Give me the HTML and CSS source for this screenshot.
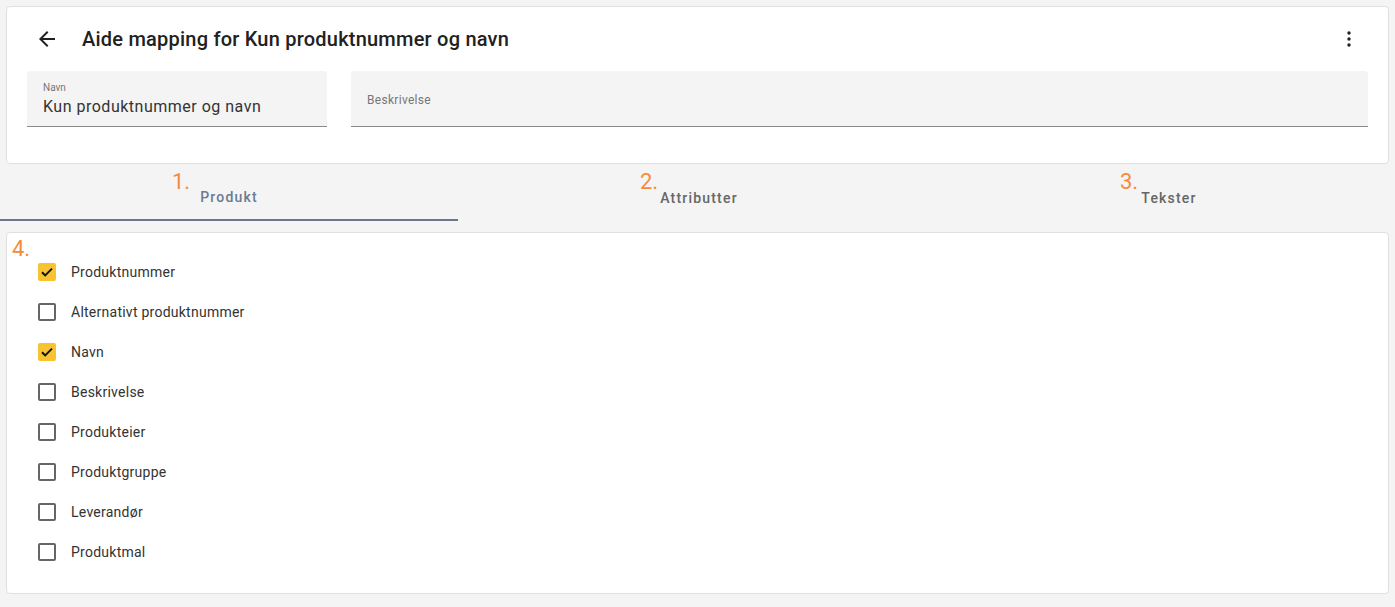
FILE: index.html
```html
<!DOCTYPE html>
<html lang="no">
<head>
<meta charset="utf-8">
<title>Aide mapping</title>
<link rel="stylesheet" href="styles.css">
</head>
<body>
<div class="page">
  <section class="card header-card">
    <div class="header-row">
      <button class="icon-btn back" aria-label="Tilbake">
        <svg width="24" height="24" viewBox="0 0 24 24"><path d="M20 11H7.83l5.59-5.59L12 4l-8 8 8 8 1.41-1.41L7.83 13H20v-2z" fill="#212121"/></svg>
      </button>
      <h1 class="title">Aide mapping for Kun produktnummer og navn</h1>
      <button class="icon-btn more" aria-label="Mer">
        <svg width="24" height="24" viewBox="0 0 24 24"><circle cx="12" cy="6" r="1.7" fill="#212121"/><circle cx="12" cy="12" r="1.7" fill="#212121"/><circle cx="12" cy="18" r="1.7" fill="#212121"/></svg>
      </button>
    </div>
    <div class="fields">
      <div class="field field-name">
        <span class="field-label">Navn</span>
        <span class="field-value">Kun produktnummer og navn</span>
      </div>
      <div class="field field-desc">
        <span class="field-placeholder">Beskrivelse</span>
      </div>
    </div>
  </section>

  <nav class="tabs">
    <div class="tab active"><span class="tab-label">Produkt</span><span class="marker m1">1.</span></div>
    <div class="tab"><span class="tab-label">Attributter</span><span class="marker m2">2.</span></div>
    <div class="tab"><span class="tab-label">Tekster</span><span class="marker m3">3.</span></div>
  </nav>

  <section class="card list-card">
    <span class="marker m4">4.</span>
    <div class="row"><span class="cb checked"><svg width="14" height="14" viewBox="0 0 14 14"><path d="M2 7.2l3.2 3.2L12 3.6" fill="none" stroke="#111" stroke-width="2"/></svg></span><span class="row-label">Produktnummer</span></div>
    <div class="row"><span class="cb"></span><span class="row-label">Alternativt produktnummer</span></div>
    <div class="row"><span class="cb checked"><svg width="14" height="14" viewBox="0 0 14 14"><path d="M2 7.2l3.2 3.2L12 3.6" fill="none" stroke="#111" stroke-width="2"/></svg></span><span class="row-label">Navn</span></div>
    <div class="row"><span class="cb"></span><span class="row-label">Beskrivelse</span></div>
    <div class="row"><span class="cb"></span><span class="row-label">Produkteier</span></div>
    <div class="row"><span class="cb"></span><span class="row-label">Produktgruppe</span></div>
    <div class="row"><span class="cb"></span><span class="row-label">Leverandør</span></div>
    <div class="row"><span class="cb"></span><span class="row-label">Produktmal</span></div>
  </section>
</div>
</body>
</html>
```

FILE: styles.css
```css
* { box-sizing: border-box; }
html, body { margin: 0; padding: 0; }
body {
  background: #f4f4f4;
  font-family: Roboto, "Liberation Sans", Arial, sans-serif;
  color: #212121;
  width: 1395px;
  height: 607px;
  overflow: hidden;
}
.page { padding-top: 6px; }
.card {
  background: #fff;
  border: 1px solid #e0e0e0;
  border-radius: 4px;
  margin: 0 6px;
}
.header-card { height: 158px; padding: 0 20px 0 20px; }
.header-row {
  display: flex;
  align-items: center;
  height: 64px;
}
.icon-btn {
  background: none;
  border: 0;
  padding: 0;
  width: 24px;
  height: 24px;
  display: flex;
  align-items: center;
  justify-content: center;
  cursor: pointer;
}
.back { margin-left: 8px; }
.title {
  margin: 0 0 0 23px;
  font-size: 20px;
  font-weight: 500;
  flex: 1;
  letter-spacing: 0.22px;
}
.more { margin-right: 7px; }
.fields {
  display: flex;
  gap: 24px;
}
.field {
  background: #f4f4f4;
  border-radius: 4px 4px 0 0;
  border-bottom: 1px solid #8a8a8a;
  height: 56px;
  padding: 0 16px;
  display: flex;
  flex-direction: column;
  justify-content: center;
}
.field-name { width: 300px; }
.field-desc { flex: 1; }
.field-label { font-size: 10px; color: #777; line-height: 12px; margin-top: 2px; }
.field-value { font-size: 16px; color: #333; line-height: 22px; margin-top: 2px; letter-spacing: 0.5px; }
.field-placeholder { font-size: 12px; color: #777; line-height: 14px; margin-top: 3px; letter-spacing: 0.3px; }

.tabs {
  display: grid;
  grid-template-columns: 458px 458px 458px;
  column-gap: 12px;
  height: 57px;
  overflow: hidden;
  width: 1395px;
}
.tab {
  position: relative;
  display: flex;
  align-items: center;
  justify-content: center;
  padding-top: 10px;
  height: 57px;
}
.tab-label {
  font-size: 14px;
  font-weight: 500;
  letter-spacing: 1.2px;
  color: #666;
}
.tab.active { border-bottom: 2px solid #6b778c; }
.tab.active .tab-label { color: #6b7b91; }

.marker {
  position: absolute;
  color: #f68a3c;
  font-size: 22px;
  line-height: 22px;
  font-weight: 400;
}
.m1 { left: 172px; top: 7px; }
.m2 { left: 170px; top: 7px; }
.m3 { left: 180px; top: 7px; }

.list-card {
  position: relative;
  margin-top: 11px;
  height: 362px;
  padding: 19px 31px 20px;
}
.m4 { left: 5px; top: 5px; }
.row {
  display: flex;
  align-items: center;
  height: 40px;
}
.cb {
  width: 18px;
  height: 18px;
  border: 2px solid #666;
  border-radius: 2px;
  display: flex;
  align-items: center;
  justify-content: center;
  flex: none;
}
.cb.checked { background: #f8c331; border-color: #f8c331; }
.row-label {
  margin-left: 15px;
  font-size: 14px;
  color: #333;
  letter-spacing: 0.25px;
}
```
